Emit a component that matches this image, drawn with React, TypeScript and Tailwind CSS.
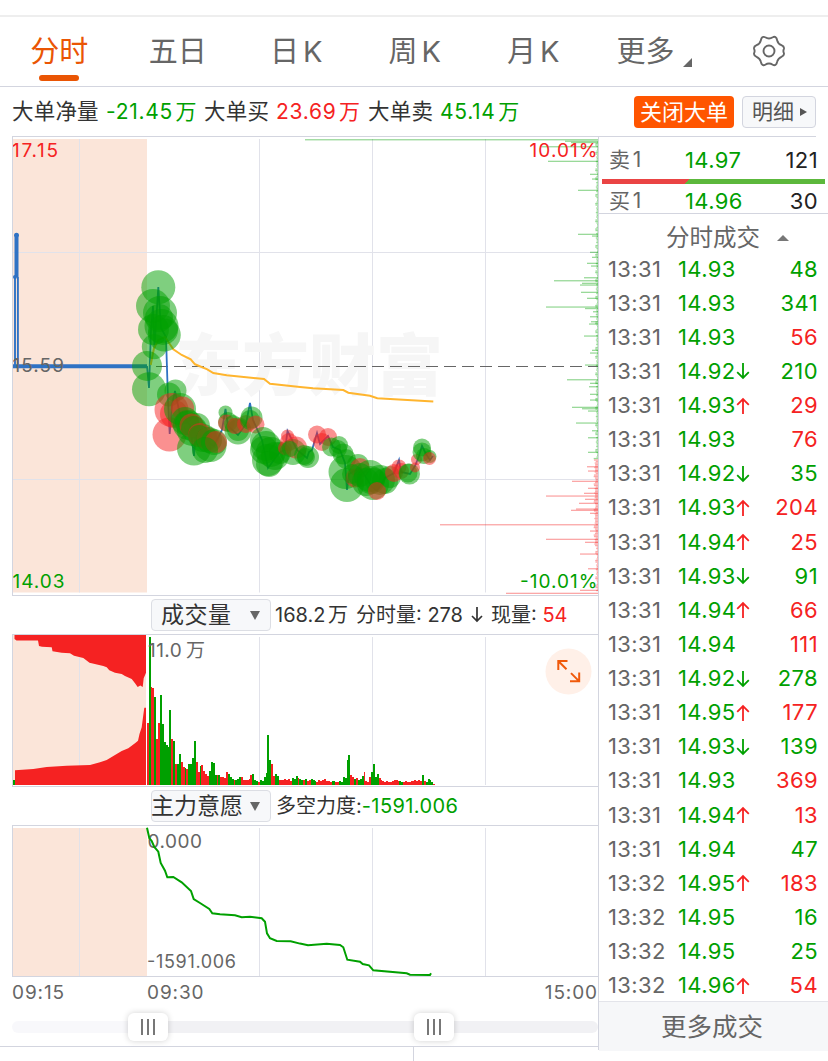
import { ReactNode } from "react";

const FONT = "font-['Inter','Noto_Sans_CJK_SC',sans-serif]";

const TABS = ["分时", "五日", "日 K", "周 K", "月 K"];

type Trade = { time: string; price: string; dir?: "up" | "down"; vol: number; buy: boolean };

const TRADES: Trade[] = [
  { time: "13:31", price: "14.93", vol: 48, buy: false },
  { time: "13:31", price: "14.93", vol: 341, buy: false },
  { time: "13:31", price: "14.93", vol: 56, buy: true },
  { time: "13:31", price: "14.92", dir: "down", vol: 210, buy: false },
  { time: "13:31", price: "14.93", dir: "up", vol: 29, buy: true },
  { time: "13:31", price: "14.93", vol: 76, buy: true },
  { time: "13:31", price: "14.92", dir: "down", vol: 35, buy: false },
  { time: "13:31", price: "14.93", dir: "up", vol: 204, buy: true },
  { time: "13:31", price: "14.94", dir: "up", vol: 25, buy: true },
  { time: "13:31", price: "14.93", dir: "down", vol: 91, buy: false },
  { time: "13:31", price: "14.94", dir: "up", vol: 66, buy: true },
  { time: "13:31", price: "14.94", vol: 111, buy: true },
  { time: "13:31", price: "14.92", dir: "down", vol: 278, buy: false },
  { time: "13:31", price: "14.95", dir: "up", vol: 177, buy: true },
  { time: "13:31", price: "14.93", dir: "down", vol: 139, buy: false },
  { time: "13:31", price: "14.93", vol: 369, buy: true },
  { time: "13:31", price: "14.94", dir: "up", vol: 13, buy: true },
  { time: "13:31", price: "14.94", vol: 47, buy: false },
  { time: "13:32", price: "14.95", dir: "up", vol: 183, buy: true },
  { time: "13:32", price: "14.95", vol: 16, buy: false },
  { time: "13:32", price: "14.95", vol: 25, buy: false },
  { time: "13:32", price: "14.96", dir: "up", vol: 54, buy: true },
];

// big orders: x, y, radius, g = sell / r = buy
const ORDERS: [number, number, number, "g" | "r"][] = [
  [158.3, 287.3, 17, "g"], [153, 306, 17, "g"], [160, 313, 17, "g"], [153.5, 329.5, 15.5, "g"],
  [161.5, 326, 17, "g"], [159, 318, 14, "g"], [164.3, 335, 16.5, "g"], [163, 330, 15, "g"],
  [154.3, 346.7, 12.5, "g"], [147, 366, 15, "g"], [149, 389.3, 17, "g"], [169, 394.5, 12, "g"],
  [175.5, 390.5, 11, "g"], [171.5, 410, 17, "r"], [169.5, 434.5, 17, "r"], [174, 414, 14, "r"],
  [180, 409, 16, "g"], [182.5, 408, 11.5, "r"], [185, 421, 14, "g"], [188, 425, 15, "g"],
  [187, 423, 12, "g"], [192, 431, 15, "g"], [194, 448.5, 17, "g"], [197, 426, 13, "g"],
  [191.5, 425.5, 12, "r"], [194, 429, 13, "g"], [210.5, 446, 16, "g"], [203, 438, 14, "g"],
  [200, 435, 12, "r"], [199, 436, 11, "g"], [208, 439, 11.5, "r"], [209, 440, 13, "g"],
  [214, 442, 13, "g"], [216, 442, 11, "r"], [205, 450, 13, "g"], [225.5, 412.5, 7, "g"],
  [228, 422, 10, "g"], [226.5, 423, 8.5, "r"], [238, 431, 13.5, "g"], [238, 430, 11, "g"],
  [233, 424, 9, "g"], [235, 426, 8, "r"], [246, 424, 9, "r"], [251.5, 417.5, 11, "g"],
  [250, 420, 10, "g"], [255.5, 424.5, 9, "r"], [263, 440, 13, "g"], [266, 446, 15, "g"],
  [264, 450, 14, "g"], [271, 452, 15, "g"], [268, 460, 16, "g"], [275, 456, 14, "g"],
  [269, 464, 13, "g"], [280, 453, 11, "g"], [287.5, 436, 6.5, "r"], [289, 442, 9, "r"],
  [285, 448, 7, "r"], [293, 452, 13, "g"], [296, 447.5, 11, "r"], [290, 449, 8, "g"],
  [308, 457, 11, "g"], [304, 455, 10, "g"], [306, 457, 9, "g"], [317, 434.5, 9, "r"],
  [328, 437, 9, "r"], [322, 442, 9, "r"], [339, 445, 9, "g"], [331.5, 447, 9.5, "g"],
  [343, 454, 10.5, "g"], [338, 449, 9, "g"], [346, 459, 10, "g"], [345.5, 472, 17, "g"],
  [347, 485, 17, "g"], [358, 465, 11, "g"], [360, 468, 10, "r"], [355, 478, 9.5, "r"],
  [352, 474, 10, "g"], [360, 475, 12, "g"], [370, 476, 16, "g"], [373, 484, 16, "g"],
  [366, 482, 14, "g"], [371, 480, 14, "g"], [380, 480, 15, "g"], [385, 481, 13, "g"],
  [377, 491, 9, "r"], [390, 477, 11, "g"], [394, 473, 9, "r"], [399, 467, 7.5, "r"],
  [401, 471, 8, "r"], [409.5, 474, 10.5, "g"], [408, 473, 9.5, "g"], [415, 467.5, 5, "r"],
  [416.5, 459.5, 5.5, "r"], [422, 447.5, 9, "g"], [422, 452, 9.5, "g"], [424, 456, 8, "g"],
  [430, 456.5, 6.5, "g"], [429.5, 458.5, 6.5, "r"],
];

const PRICE_LINE =
  "147,366 149,388 151,330 153,306 154.5,348 158.3,287 161,328 166,337 168,400 169.7,434 172,405 175,391 180,415 190,425 194,456 196,430 205,440 214,446 222,430 225.5,409 228,426 238,435 246,424 250,403 253,420 262,440 268,468 280,452 285,450 287.5,431 297,450 307,458 309,452 312,450 317,433 320,444 328,436 333,447 340,450 345,463 347,490 349,474 360,468 372,487 377,491 385,478 394,473 399,460 401,472 410,474 415,466 419,456 422,446 426,454 430,460 433,456";

const AVG_LINE =
  "150.7,365 154,348 158.3,340 165,337 169.3,343.3 173.3,349.3 181.7,355 190.7,359.3 195,364.3 207.3,369.3 213.3,373 226.7,375.3 264,379 270,383.7 300,387 313,388.3 343.3,390 348.3,392.7 370,395.7 377.3,398.3 433.3,401.6";

const FORCE_LINE =
  "147,827.7 149.3,838 151.7,841 154.3,847 158.3,851.7 160.7,863 165,870.7 167.3,877.3 173.3,877 181.7,882.3 191,891 193.7,899 200,903 209.3,909 212.3,913.3 220,914.3 235,915.3 241.7,917.3 250,916.7 261.7,918.3 265,921.7 267,933.3 270,938.3 276.7,941 290.7,941.3 300,943.6 308,945.3 326.7,943.7 340,945 343.3,947.3 347.3,959.7 360,961.7 362.7,964 369,965.3 373.3,970.3 406.7,973.3 410,974.7 430,975 431,973.3";

// order distribution by price: y, length
const DIST: [number, number][] = [
  [139.7, 293], [141.2, 33], [142.5, 27], [146.7, 57], [161.3, 50], [174.3, 8], [179, 6], [190.3, 20],
  [234.3, 20], [236, 6], [252.3, 8], [257.3, 6], [263.3, 11], [266, 7], [277.7, 14], [280.7, 44],
  [283.3, 16], [285, 18], [292.3, 17], [298.3, 11], [307, 52], [308.5, 13], [311.7, 5], [316.7, 8],
  [321.7, 7], [324, 9], [336, 14], [350.3, 6], [353, 8], [365, 13], [379.7, 31], [383.3, 8],
  [386.7, 9], [394.3, 8], [400, 8], [407.3, 26], [408.7, 16], [411, 10], [423, 22], [430.7, 6],
  [437.7, 10], [452.3, 10], [466.7, 11], [471, 10], [481.3, 26], [488.3, 10], [493.3, 14], [496, 52],
  [499.3, 13], [503.3, 19], [509, 22], [510.3, 27], [513.3, 8], [524.7, 158], [531, 8], [539.3, 52],
  [542.3, 13], [554, 18], [568.7, 10], [590.3, 18], [593.3, 92],
];
const DIST_FILL = Array.from({ length: 300 }, (_, i): [number, number] => [
  142 + i * 1.5,
  0.8 + ((i * 37 + i * i * 11) % 17) / 8 + (i > 210 && i < 270 ? 1.5 : 0),
]);

// one bar per minute from 09:30, negative = falling minute
const VOLUME = [
  62, -148, 98, 97, -88, 46, 62, -90, -61, -43, -40, -38, -75, 46, -44, 21, -21, -31, 23, 18, -17, 16,
  -21, -21, -27, -44, 23, 13, -19, 20, 14, 11, 9, -14, -23, -22, -10, 10, -10, 8, 8, 7, 13, -11, -8, -6,
  5, -5, -6, -8, 8, 5, 5, 5, 6, 10, -11, -5, -4, 3, -5, -4, -8, -12, -50, -25, 21, 9, -11, -9, 5, 5, 5, 6,
  5, 6, 4, -7, -6, -9, 7, -6, -5, 5, -6, 4, 5, -6, -5, -4, 3, 5, 4, 5, 6, 4, 4, 3, -4, -4, 3, 3, -4, -3,
  -8, -7, -25, -30, 10, 8, -6, 7, -5, -6, -9, 13, 4, 3, 8, -13, -21, -8, -11, 7, 5, 4, 3, 4, 3, 3, 4,
  5, 5, 4, -4, -3, 3, 4, 3, 3, 4, 4, 5, 4, 5, 4, -10, 4, -3, -6, -5, -3, 1,
];

const GRID_X = [79.5, 259.5, 372.5, 485.5];

function Grid({ top, bottom }: { top: number; bottom: number }) {
  return (
    <g stroke="#e1e2ea" strokeWidth="1">
      {GRID_X.map((x) => (
        <line key={x} x1={x} x2={x} y1={top} y2={bottom} />
      ))}
    </g>
  );
}

function PriceChart() {
  return (
    <svg viewBox="13 137 585 458" className="block h-[458px] w-[585px]">
      <rect x="13" y="139" width="134" height="453.5" fill="#fbe5d9" />
      <Grid top={139} bottom={592.5} />
      <path d="M13 252.5H598M13 479.5H598" stroke="#e1e2ea" />
      <text x="175" y="390" fontSize="67" fontWeight="900" fill="#f6f6f6" className="font-['Noto_Sans_CJK_SC',sans-serif]">
        东方财富
      </text>
      <line x1="156" x2="598" y1="366.5" y2="366.5" stroke="#666" strokeWidth="1.1" strokeDasharray="12 6" />
      {[...DIST, ...DIST_FILL].map(([y, w], i) => (
        <rect key={i} x={598 - w} y={y - 0.6} width={w} height="1.3" fill={y < 459 ? "#00a000" : "#f52222"} opacity="0.4" />
      ))}
      <g fill="none" stroke="#2f72c4">
        <path d="M16.5 234V277" strokeWidth="4" />
        <path d="M15 277V366M17.9 277V366" strokeWidth="1.9" />
        <path d="M13 366.3H147" strokeWidth="4" />
        <polyline points={PRICE_LINE} strokeWidth="1.8" />
      </g>
      <g fill="#2f72c4">
        <circle cx="16.5" cy="235.2" r="2.4" />
        <circle cx="15" cy="277" r="2" />
      </g>
      <polyline points={AVG_LINE} fill="none" stroke="#ffb52e" strokeWidth="2" />
      {ORDERS.map(([x, y, r, side], i) => (
        <circle key={i} cx={x} cy={y} r={r} fill={side === "g" ? "#00a000" : "#f52222"} opacity="0.5" />
      ))}
      <g fontSize="19">
        <text x="12" y="157" fill="#f52222" textLength="46">17.15</text>
        <text x="12.5" y="372" fill="#666" textLength="51.5">15.59</text>
        <text x="12.5" y="587.5" fill="#00a000" textLength="52">14.03</text>
        <text x="529.5" y="157" fill="#f52222" textLength="68">10.01%</text>
        <text x="520" y="587.5" fill="#00a000" textLength="77.5">-10.01%</text>
      </g>
    </svg>
  );
}

function VolumeChart() {
  return (
    <svg viewBox="13 635 585 151" className="block h-[151px] w-[585px]">
      <rect x="13" y="635" width="134" height="150" fill="#fbe5d9" />
      <Grid top={637} bottom={785} />
      <path
        fill="#f52222"
        d="M14.5 635V639L16.5 640.5H38L39 646L42 646.7L51.7 647.3L52.5 651.3L61.7 652.7L70 653.3L74 655.7L83.3 658L89.5 662.7L103.3 666L106.7 667.3L109.3 670.3L115 672.7L121.7 674L125 676L131.7 679L135 683.3L137.7 687L140.3 685.5L142.7 687L143.7 678.3L146 672.7V635Z"
      />
      <path
        fill="#f52222"
        d="M15 785V770.3L33.3 769L46.7 767L66.7 765.7L90 765L100 762.3L106.7 760L115 755L121.7 751L128.3 748.3L135 743.3L138 740.7L139.5 734L141.7 727.3L143.3 715L144.3 707.7H146V785Z"
      />
      <rect x="13" y="780" width="2" height="5" fill="#00a000" />
      <rect x="146" y="635" width="1.4" height="150" fill="#fff" />
      <g shapeRendering="crispEdges">
        {VOLUME.map((v, i) => (
          <rect
            key={i}
            x={146.8 + i * 1.885}
            y={785 - Math.abs(v)}
            width="1.885"
            height={Math.abs(v)}
            fill={v > 0 ? "#f52222" : "#00a000"}
          />
        ))}
      </g>
      <text x="148" y="657" fontSize="19" fill="#666" textLength="57" className="[word-spacing:-2px]">
        11.0 万
      </text>
      <circle cx="568.5" cy="671.5" r="23" fill="#fff0e8" />
      <path
        d="M558.3 670V661H567.5M558.5 661.2L566.5 669.2M579.2 672.5V681.3H570M579 681.1L571 673.1"
        fill="none"
        stroke="#f0590a"
        strokeWidth="2"
      />
    </svg>
  );
}

function ForceChart() {
  return (
    <svg viewBox="13 826 585 150" className="block h-[150px] w-[585px]">
      <rect x="13" y="828" width="134" height="148" fill="#fbe5d9" />
      <Grid top={828} bottom={976} />
      <g fontSize="19" fill="#666">
        <text x="147.5" y="847.5" textLength="54.5">0.000</text>
        <text x="147" y="967.5" fontSize="18" textLength="89">-1591.006</text>
      </g>
      <polyline points={FORCE_LINE} fill="none" stroke="#00a000" strokeWidth="2" />
    </svg>
  );
}

function Picker({ children }: { children: ReactNode }) {
  return (
    <button className="flex h-8 w-[120px] items-center rounded-[4px] border border-[#dcdee4] bg-[#f7f8fa] text-[23px] text-[#333]">
      {children}
      <svg viewBox="0 0 10 9" className="mr-[10px] ml-auto h-[9px] w-[10px]">
        <path d="M0 0H10L5 9Z" fill="#666" />
      </svg>
    </button>
  );
}

function Arrow({ dir }: { dir: "up" | "down" }) {
  return (
    <svg viewBox="0 0 14 18" className={`h-[18px] w-[14px] ${dir === "up" ? "text-[#f52222]" : "text-[#00a000]"}`}>
      <path
        d={dir === "up" ? "M7 17V2M1.2 7.8L7 2L12.8 7.8" : "M7 1V16M1.2 10.2L7 16L12.8 10.2"}
        fill="none"
        stroke="currentColor"
        strokeWidth="1.8"
      />
    </svg>
  );
}

function Quote({ label, price, vol }: { label: string; price: string; vol: number }) {
  return (
    <div className="flex h-7 shrink-0 items-center pr-[10px] pl-[10px] text-[22px] tracking-[0.4px]">
      <span className="w-[76px] text-[21px] text-[#666] [word-spacing:-4px]">{label}</span>
      <span className="text-[#00a000]">{price}</span>
      <span className="ml-auto text-[#222]">{vol}</span>
    </div>
  );
}

function Handle() {
  return (
    <div className="flex h-7 w-10 items-center justify-center gap-[4px] rounded-md bg-white shadow-[0_0_6px_rgba(0,0,0,0.18)]">
      <i className="h-4 w-[2px] bg-[#777]" />
      <i className="h-4 w-[2px] bg-[#777]" />
      <i className="h-4 w-[2px] bg-[#777]" />
    </div>
  );
}

export default function App() {
  return (
    <div className={`${FONT} flex h-[1061px] w-[828px] flex-col overflow-hidden bg-white`}>
      <div className="h-[17px] shrink-0 border-b-2 border-[#eee]" />

      <nav className="flex h-[70px] shrink-0 border-b border-[#d3d5df] text-[29px] text-[#666]">
        {TABS.map((tab, i) => (
          <div
            key={tab}
            className={`flex w-[118.5px] flex-col items-center whitespace-nowrap pt-[13px] [word-spacing:-4px] ${i === 0 ? "text-[#ea5504]" : ""}`}
          >
            <span className="leading-[44px]">{tab}</span>
            {i === 0 && <span className="mt-[1px] h-[6px] w-10 rounded-full bg-[#ea5504]" />}
          </div>
        ))}
        <div className="flex w-[116px] pt-[13px] pl-[24px] leading-[44px]">
          更多
          <svg viewBox="0 0 9 9" className="mt-[28px] ml-[8px] h-[9px] w-[9px]">
            <path d="M9 0V9H0Z" fill="#666" />
          </svg>
        </div>
        <svg viewBox="0 0 34 32" className="mt-[18px] ml-[43px] h-8 w-[34px]" fill="none" stroke="#666" strokeWidth="1.9">
          <path d="M9.5 3.2C10.5 1.7 12 1.5 13.2 2.3C15.6 3.8 18.4 3.8 20.8 2.3C22 1.5 23.5 1.7 24.5 3.2L25.2 5.4C25.8 7.8 27 9.2 29.4 10.2C31.3 11 32.3 12.2 31.9 13.8C31.2 15.3 31.2 16.7 31.9 18.2C32.3 19.8 31.3 21 29.4 21.8C27 22.8 25.8 24.2 25.2 26.6L24.5 28.8C23.5 30.3 22 30.5 20.8 29.7C18.4 28.2 15.6 28.2 13.2 29.7C12 30.5 10.5 30.3 9.5 28.8L8.8 26.6C8.2 24.2 7 22.8 4.6 21.8C2.7 21 1.7 19.8 2.1 18.2C2.8 16.7 2.8 15.3 2.1 13.8C1.7 12.2 2.7 11 4.6 10.2C7 9.2 8.2 7.8 8.8 5.4Z" />
          <circle cx="17" cy="16" r="5.5" />
        </svg>
      </nav>

      <div className="flex h-[49px] shrink-0 items-center whitespace-nowrap pl-3 text-[21px] tracking-[0.7px] text-[#333] [word-spacing:-4px]">
        <span className="w-[94px] text-[21.5px] tracking-[0.2px]">大单净量</span>
        <span className="w-[98px] text-[#00a000]">-21.45 万</span>
        <span className="w-[72px] text-[21.5px] tracking-[0.2px]">大单买</span>
        <span className="w-[92px] text-[#f52222]">23.69 万</span>
        <span className="w-[72px] text-[21.5px] tracking-[0.2px]">大单卖</span>
        <span className="text-[#00a000]">45.14 万</span>
        <button className="ml-auto h-8 w-[100px] rounded-[4px] bg-[#ff5500] text-[22px] leading-8 tracking-normal text-white">关闭大单</button>
        <button className="mr-3 ml-2 flex h-8 w-[74px] items-center rounded-[4px] border border-[#d3d5df] bg-[#f7f8fa] pl-[9px] text-[21px] tracking-normal text-[#555]">
          明细
          <svg viewBox="0 0 7 8" className="ml-[6px] h-2 w-[7px]">
            <path d="M0 0L7 4L0 8Z" fill="#555" />
          </svg>
        </button>
      </div>

      <div className="flex min-h-0 flex-1">
        <main className="flex w-[598px] flex-col">
          <section className="ml-3 h-[460px] border border-r-0 border-[#d3d5df]">
            <PriceChart />
          </section>
          <div className="flex h-[38px] items-center whitespace-nowrap pl-[151px] text-[20px] text-[#333]">
            <Picker>
              <span className="pl-[9px] tracking-[0.5px]">成交量</span>
            </Picker>
            <span className="ml-[4px] w-[81px] text-[20px] [word-spacing:-3px]">168.2 万</span>
            <span>分时量: 278</span>
            <svg viewBox="0 0 12 16" className="mx-[8px] h-4 w-3" fill="none" stroke="#333" strokeWidth="1.7">
              <path d="M6 0V14M1 9L6 14L11 9" />
            </svg>
            <span>
              现量: <b className="font-normal text-[#f52222]">54</b>
            </span>
          </div>
          <section className="ml-3 h-[153px] border border-r-0 border-[#d3d5df]">
            <VolumeChart />
          </section>
          <div className="flex h-[38px] items-center whitespace-nowrap pl-[151px] text-[20px] text-[#333]">
            <Picker>
              <span className="-ml-px">主力意愿</span>
            </Picker>
            <span className="ml-[5px]">多空力度:</span>
            <span className="tracking-[0.4px] text-[#00a000]">-1591.006</span>
          </div>
          <section className="ml-3 h-[152px] border border-r-0 border-[#d3d5df]">
            <ForceChart />
          </section>
          <div className="flex h-[31px] items-center pt-[2px] pl-[12px] text-[19px] tracking-[0.9px] text-[#666]">
            <span className="w-[135px]">09:15</span>
            <span>09:30</span>
            <span className="ml-auto">15:00</span>
          </div>
          <div className="flex h-[39px] items-center border-b border-[#d3d5df] pl-3">
            <div className="flex h-3 w-full items-center rounded-full bg-[linear-gradient(to_right,#f8f8fb_136px,#f1f1f4_136px)] pl-[116px]">
              <Handle />
              <div className="w-[246px]" />
              <Handle />
            </div>
          </div>
          <div className="ml-[413px] flex-1 border-l border-[#d3d5df]" />
        </main>

        <aside className="flex h-[914px] w-[230px] flex-col border-l border-[#d3d5df]">
          <div className="mr-3 border-t border-[#d3d5df]" />
          <div className="flex h-[77px] shrink-0 flex-col border-b border-[#d3d5df] pt-[9px]">
            <Quote label="卖 1" price="14.97" vol={121} />
            <div className="mx-[3px] mt-[5px] mb-[3px] h-[5px] shrink-0 bg-[linear-gradient(135deg,#ea4444_38.5%,#5cb83c_38.5%)]" />
            <Quote label="买 1" price="14.96" vol={30} />
          </div>
          <div className="flex h-[38px] shrink-0 items-center pt-[9px] pl-[67px] text-[23.5px] text-[#666]">
            分时成交
            <svg viewBox="0 0 12 6" className="ml-[17px] h-[6px] w-3">
              <path d="M0 6L6 0L12 6Z" fill="#777" />
            </svg>
          </div>
          <div className="flex h-[749px] shrink-0 flex-col">
            {TRADES.map((t, i) => (
              <div key={i} className="flex h-[34.14px] shrink-0 items-center pr-[10px] pl-[9px] text-[22px] tracking-[0.4px]">
                <span className="w-[70px] text-[#666]">{t.time}</span>
                <span className="text-[#00a000]">{t.price}</span>
                {t.dir && <Arrow dir={t.dir} />}
                <span className={`ml-auto ${t.buy ? "text-[#f52222]" : "text-[#00a000]"}`}>{t.vol}</span>
              </div>
            ))}
          </div>
          <div className="flex-1 border-t border-[#e3e4ea] bg-[#f6f7f9] text-center text-[25.5px] leading-[49px] text-[#666]">
            <span className="-ml-[3px]">更多成交</span>
          </div>
        </aside>
      </div>
    </div>
  );
}
